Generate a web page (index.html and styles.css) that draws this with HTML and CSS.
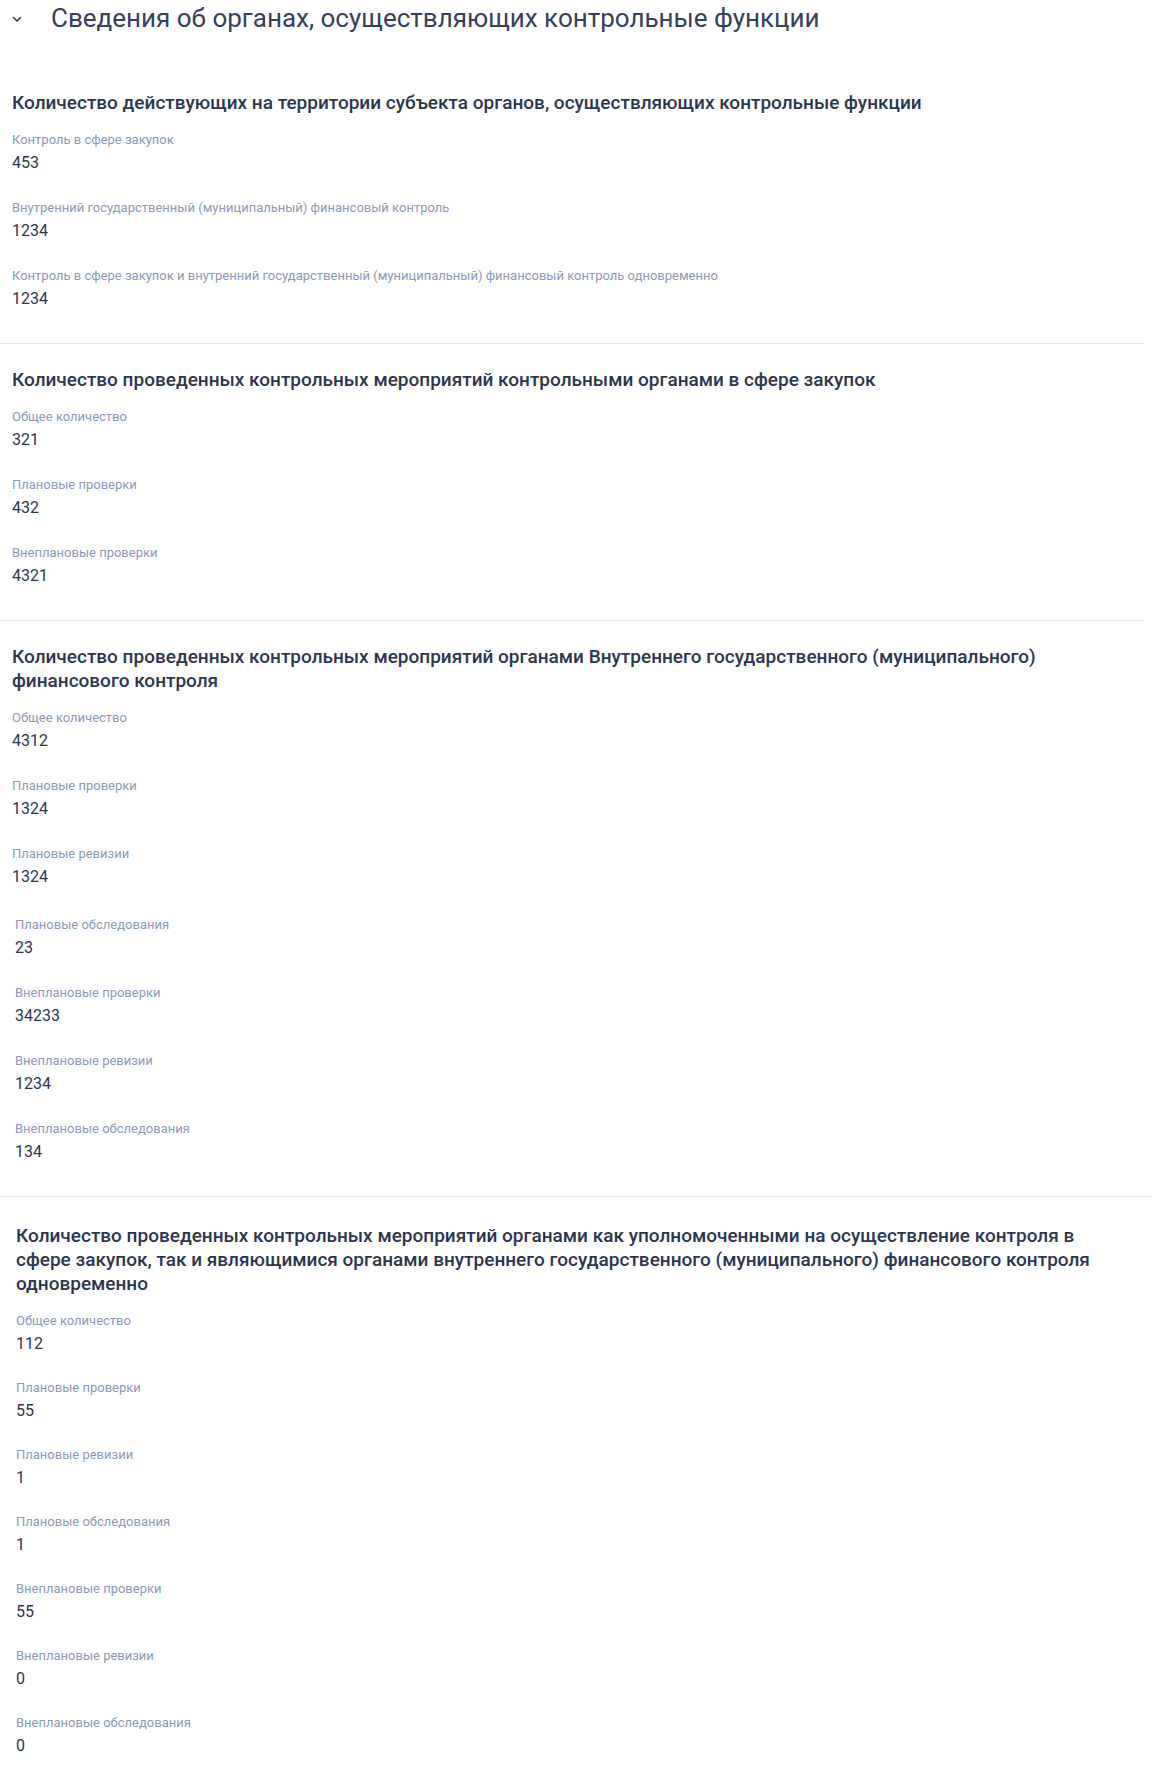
FILE: index.html
```html
<!DOCTYPE html>
<html lang="ru">
<head>
  <meta charset="UTF-8">
  <meta name="viewport" content="width=device-width, initial-scale=1.0">
  <title>Сведения об органах</title>
  <link rel="stylesheet" href="styles.css">
</head>
<body>
  <div class="panel">
    <div class="panel-header">
      <svg class="chevron" width="10" height="7" viewBox="0 0 10 7"><path d="M1.5 1.5 L5 5 L8.5 1.5" fill="none" stroke="#2c3650" stroke-width="1.6" stroke-linecap="round" stroke-linejoin="round"/></svg>
      <h1>Сведения об органах, осуществляющих контрольные функции</h1>
    </div>

    <div class="section section-first">
      <h2>Количество действующих на территории субъекта органов, осуществляющих контрольные функции</h2>
      <div class="fields">
        <div class="field">
          <div class="field-label">Контроль в сфере закупок</div>
          <div class="field-value">453</div>
        </div>
        <div class="field">
          <div class="field-label">Внутренний государственный (муниципальный) финансовый контроль</div>
          <div class="field-value">1234</div>
        </div>
        <div class="field">
          <div class="field-label">Контроль в сфере закупок и внутренний государственный (муниципальный) финансовый контроль одновременно</div>
          <div class="field-value">1234</div>
        </div>
      </div>
    </div>

    <div class="section">
      <h2>Количество проведенных контрольных мероприятий контрольными органами в сфере закупок</h2>
      <div class="fields">
        <div class="field">
          <div class="field-label">Общее количество</div>
          <div class="field-value">321</div>
        </div>
        <div class="field">
          <div class="field-label">Плановые проверки</div>
          <div class="field-value">432</div>
        </div>
        <div class="field">
          <div class="field-label">Внеплановые проверки</div>
          <div class="field-value">4321</div>
        </div>
      </div>
    </div>

    <div class="section section-wide">
      <h2>Количество проведенных контрольных мероприятий органами Внутреннего государственного (муниципального) финансового контроля</h2>
      <div class="fields">
        <div class="field">
          <div class="field-label">Общее количество</div>
          <div class="field-value">4312</div>
        </div>
        <div class="field">
          <div class="field-label">Плановые проверки</div>
          <div class="field-value">1324</div>
        </div>
        <div class="field">
          <div class="field-label">Плановые ревизии</div>
          <div class="field-value">1324</div>
        </div>
      </div>
      <div class="fields fields-inset">
        <div class="field">
          <div class="field-label">Плановые обследования</div>
          <div class="field-value">23</div>
        </div>
        <div class="field">
          <div class="field-label">Внеплановые проверки</div>
          <div class="field-value">34233</div>
        </div>
        <div class="field">
          <div class="field-label">Внеплановые ревизии</div>
          <div class="field-value">1234</div>
        </div>
        <div class="field">
          <div class="field-label">Внеплановые обследования</div>
          <div class="field-value">134</div>
        </div>
      </div>
    </div>

    <div class="section section-wide section-inset section-last">
      <h2>Количество проведенных контрольных мероприятий органами как уполномоченными на осуществление контроля в сфере закупок, так и являющимися органами внутреннего государственного (муниципального) финансового контроля одновременно</h2>
      <div class="fields">
        <div class="field">
          <div class="field-label">Общее количество</div>
          <div class="field-value">112</div>
        </div>
        <div class="field">
          <div class="field-label">Плановые проверки</div>
          <div class="field-value">55</div>
        </div>
        <div class="field">
          <div class="field-label">Плановые ревизии</div>
          <div class="field-value">1</div>
        </div>
        <div class="field">
          <div class="field-label">Плановые обследования</div>
          <div class="field-value">1</div>
        </div>
        <div class="field">
          <div class="field-label">Внеплановые проверки</div>
          <div class="field-value">55</div>
        </div>
        <div class="field">
          <div class="field-label">Внеплановые ревизии</div>
          <div class="field-value">0</div>
        </div>
        <div class="field">
          <div class="field-label">Внеплановые обследования</div>
          <div class="field-value">0</div>
        </div>
      </div>
    </div>
  </div>
</body>
</html>
```

FILE: styles.css
```css
body {
  font-family: Roboto, "Noto Sans", sans-serif;
  background-color: #fff;
  color: #2c3650;
  margin: 0;
  padding: 0;
}
.panel {
  width: 1157px;
}
.panel-header {
  display: flex;
  align-items: center;
  height: 36px;
  padding-left: 12px;
}
.chevron {
  margin-right: 29px;
  margin-top: 2px;
}
h1 {
  margin: 0;
  font-size: 26px;
  font-weight: 400;
  line-height: 36px;
  color: #34405e;
}
.section {
  margin-right: 13px;
  padding: 24px 0 33px 12px;
  border-bottom: 1px solid #e3e3ec;
}
.section-first {
  padding-top: 55px;
}
.section-wide {
  margin-right: 6px;
}
.section-inset {
  padding-left: 16px;
  padding-right: 26px;
  padding-top: 27px;
}
.section-last {
  border-bottom: none;
  padding-bottom: 12px;
}
.section-last .fields {
  gap: 24px;
}
h2 {
  margin: 0 0 16px;
  font-size: 19px;
  font-weight: 500;
  line-height: 24px;
  color: #2c3650;
}
.fields {
  display: flex;
  flex-direction: column;
  gap: 25px;
}
.fields-inset {
  padding-left: 3px;
  margin-top: 28px;
}
.field-label {
  font-size: 13px;
  line-height: 18px;
  color: #8c99b9;
}
.field-value {
  margin-top: 2px;
  font-size: 16px;
  line-height: 23px;
  color: #2c3650;
}
```
